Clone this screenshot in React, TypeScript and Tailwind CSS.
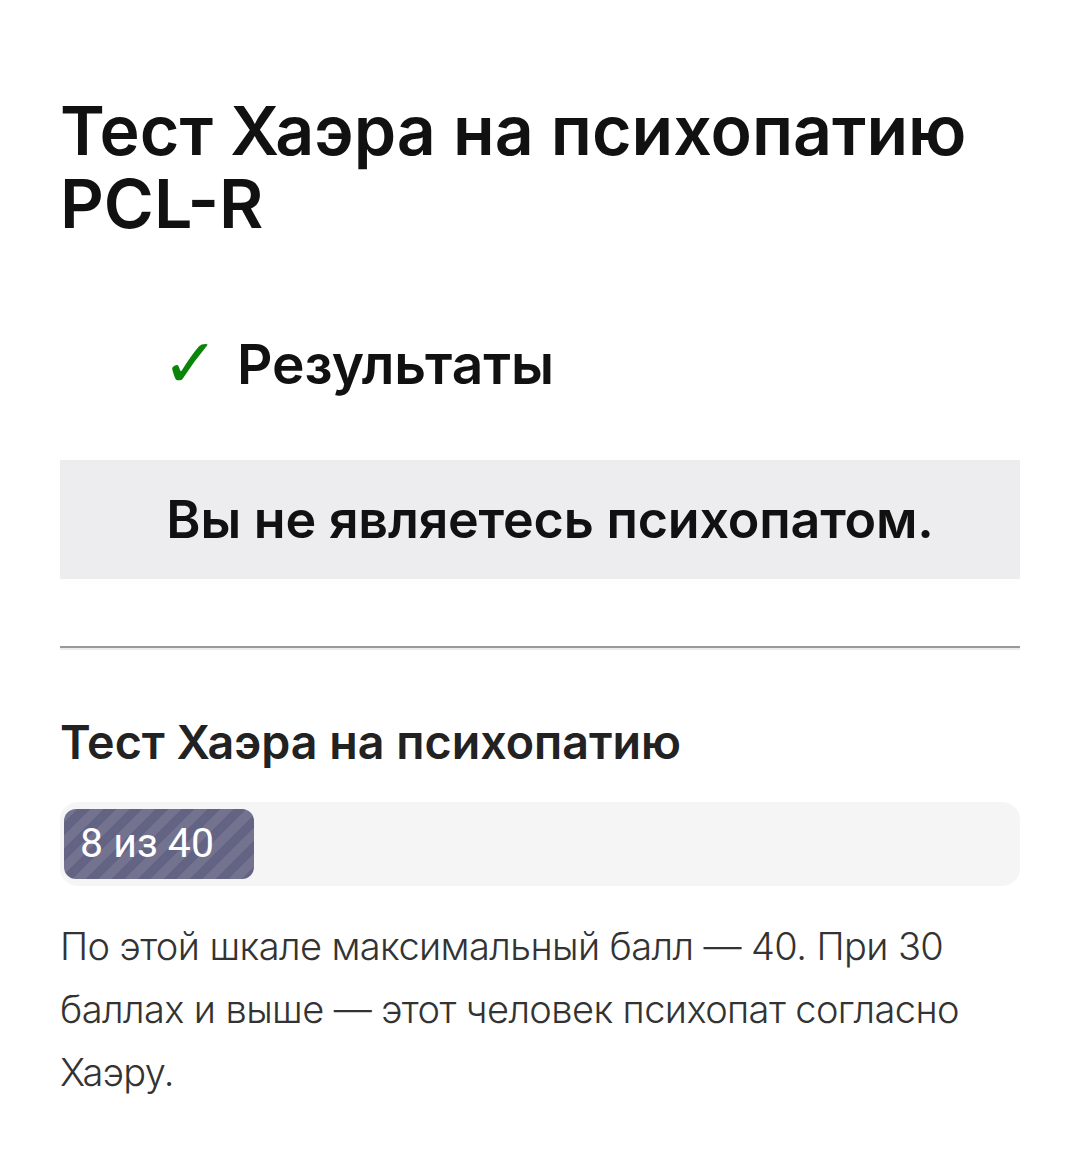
import React from 'react';

const font = { fontFamily: 'Inter, "Noto Sans", sans-serif' };

export default function App() {
  return (
    <div className="min-h-[1164px] bg-white px-[60px] pt-[94px] text-[#111]" style={font}>
      <h1 className="text-[68px] leading-[73px] font-semibold">
        Тест Хаэра на психопатию PCL-R
      </h1>

      <div className="mt-[90px] flex items-center pl-[102px]">
        <span className="text-[68px] leading-none font-bold text-[#0a850a]" style={{ fontFamily: '"DejaVu Sans", sans-serif' }}>
          ✓
        </span>
        <span className="ml-[18px] text-[55px] leading-[64px] font-semibold">Результаты</span>
      </div>

      <div className="mt-[62px] flex h-[119px] items-center justify-center bg-[#ededf0] pl-[20px]">
        <p className="text-[52px] font-semibold tracking-[-0.2px]">Вы не являетесь психопатом.</p>
      </div>

      <div className="mt-[67px] h-[2px] bg-[#999] shadow-[0_2px_0_#ececec]" />

      <h2 className="mt-[64px] text-[46.6px] leading-[60px] font-semibold text-[#222]">
        Тест Хаэра на психопатию
      </h2>

      <div className="mt-[30px] h-[84px] rounded-[18px] bg-[#f5f5f5] px-[4px] py-[7px]">
        <div
          className="flex h-full w-[190px] items-center rounded-[12px] bg-[#636383] pl-[16px] text-[41px] text-white"
          style={{
            fontFamily: 'Roboto, "Liberation Sans", sans-serif',
            backgroundImage:
              'linear-gradient(135deg, rgba(255,255,255,0.1) 25%, transparent 25%, transparent 50%, rgba(255,255,255,0.1) 50%, rgba(255,255,255,0.1) 75%, transparent 75%, transparent)',
            backgroundSize: '26px 26px',
          }}
        >
          8 из 40
        </div>
      </div>

      <p className="mt-[29px] text-[38px] leading-[63px] font-light tracking-[-0.6px] text-[#333]">
        По этой шкале максимальный балл — 40. При 30 баллах и выше — этот человек психопат согласно Хаэру.
      </p>
    </div>
  );
}
